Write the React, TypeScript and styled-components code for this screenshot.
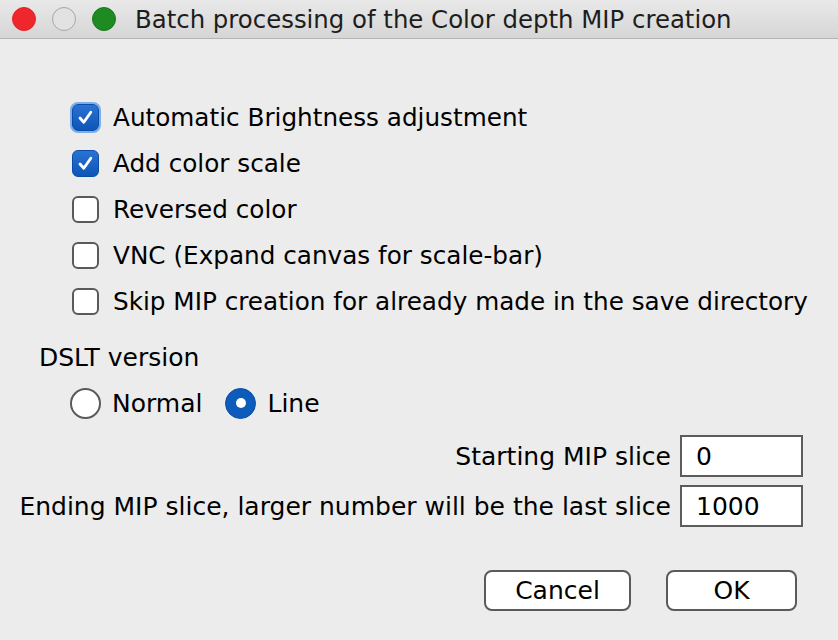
import React, { useState } from 'react';
import styled, { createGlobalStyle, css } from 'styled-components';

const FONT = `"DejaVu Sans", "Verdana", sans-serif`;

const GlobalStyle = createGlobalStyle`
  html, body {
    margin: 0;
    padding: 0;
    background: #ececec;
  }
  body {
    font-family: ${FONT};
    -webkit-font-smoothing: antialiased;
  }
`;

const Window = styled.div`
  width: 838px;
  height: 640px;
  background: #ececec;
  display: flex;
  flex-direction: column;
  overflow: hidden;
`;

const TitleBar = styled.div`
  height: 38px;
  flex-shrink: 0;
  display: flex;
  align-items: center;
  padding-left: 12px;
  background: linear-gradient(#e9e9e9, #d6d6d6);
  border-bottom: 1px solid #b4b4b4;
`;

const Lights = styled.div`
  display: flex;
  gap: 16px;
  margin-right: 19px;
`;

const Light = styled.span<{ fill: string; ring: string }>`
  width: 24px;
  height: 24px;
  border-radius: 50%;
  box-sizing: border-box;
  background: ${({ fill }) => fill};
  border: 1.5px solid ${({ ring }) => ring};
`;

const Title = styled.div`
  font-size: 24.4px;
  color: #1d1d1d;
  white-space: nowrap;
`;

const Body = styled.div`
  flex: 1;
  display: flex;
  flex-direction: column;
  padding: 55px 0 0 0;
  font-size: 25px;
  color: #000;
`;

const CheckList = styled.div`
  display: flex;
  flex-direction: column;
  padding-left: 72px;
  font-size: 24.7px;
`;

const CheckRow = styled.label`
  height: 46px;
  display: flex;
  align-items: center;
  gap: 14px;
  white-space: nowrap;
`;

const Box = styled.span<{ checked: boolean; focused?: boolean }>`
  width: 27px;
  height: 27px;
  box-sizing: border-box;
  border-radius: 6px;
  display: flex;
  align-items: center;
  justify-content: center;
  flex-shrink: 0;
  ${({ checked }) =>
    checked
      ? css`
          background: linear-gradient(#2a72d4, #0c56b8);
          border: 1.5px solid #0a4ca6;
        `
      : css`
          background: #fff;
          border: 2px solid #5a5a5a;
        `}
  ${({ focused }) =>
    focused &&
    css`
      box-shadow: 0 0 0 2px #7eaee6;
    `}
`;

const SectionLabel = styled.div`
  height: 45px;
  display: flex;
  align-items: center;
  padding-left: 39px;
  margin-top: 11px;
`;

const RadioGroup = styled.div`
  height: 46px;
  display: flex;
  align-items: center;
  padding-left: 70px;
  gap: 23px;
`;

const RadioItem = styled.label`
  display: flex;
  align-items: center;
  gap: 11px;
`;

const RadioDot = styled.span<{ checked: boolean }>`
  width: 31px;
  height: 31px;
  box-sizing: border-box;
  border-radius: 50%;
  display: flex;
  align-items: center;
  justify-content: center;
  ${({ checked }) =>
    checked
      ? css`
          background: #0d5cbc;
          border: 1.5px solid #0a4ca6;
          &::after {
            content: '';
            width: 10px;
            height: 10px;
            border-radius: 50%;
            background: #fff;
          }
        `
      : css`
          background: #fff;
          border: 2px solid #5a5a5a;
        `}
`;

const FieldGrid = styled.div`
  display: grid;
  grid-template-columns: auto 123px;
  column-gap: 9px;
  row-gap: 8px;
  justify-content: end;
  align-items: center;
  padding-right: 35px;
  margin-top: 9px;
`;

const FieldLabel = styled.div`
  text-align: right;
  white-space: nowrap;
`;

const TextField = styled.div`
  height: 42px;
  box-sizing: border-box;
  border: 2px solid #5c5c5c;
  background: #fff;
  display: flex;
  align-items: center;
  padding-left: 14px;
`;

const ButtonRow = styled.div`
  display: flex;
  justify-content: flex-end;
  gap: 35px;
  padding-right: 41px;
  margin-top: 43px;
`;

const Button = styled.button<{ w: number }>`
  width: ${({ w }) => w}px;
  height: 41px;
  box-sizing: border-box;
  border: 2px solid #5a5a5a;
  border-radius: 8px;
  background: #fff;
  font-family: ${FONT};
  font-size: 25px;
  color: #000;
  padding: 0;
`;

const Check = () => (
  <svg width="19" height="19" viewBox="0 0 19 19">
    <path d="M4 10 L7.8 14.2 L14.8 4.2" fill="none" stroke="#fff" strokeWidth="2.8" strokeLinecap="round" strokeLinejoin="round" />
  </svg>
);

const options = [
  { label: 'Automatic Brightness adjustment', checked: true, focused: true },
  { label: 'Add color scale', checked: true },
  { label: 'Reversed color', checked: false },
  { label: 'VNC (Expand canvas for scale-bar)', checked: false },
  { label: 'Skip MIP creation for already made in the save directory', checked: false },
];

export default function App() {
  const [mode, setMode] = useState('Line');

  return (
    <>
      <GlobalStyle />
      <Window>
        <TitleBar>
          <Lights>
            <Light fill="#f0262d" ring="#e0232a" />
            <Light fill="#e2e2e2" ring="#a6a6a6" />
            <Light fill="#1e8a22" ring="#18791c" />
          </Lights>
          <Title>Batch processing of the Color depth MIP creation</Title>
        </TitleBar>
        <Body>
          <CheckList>
            {options.map(o => (
              <CheckRow key={o.label}>
                <Box checked={o.checked} focused={o.focused}>
                  {o.checked && <Check />}
                </Box>
                {o.label}
              </CheckRow>
            ))}
          </CheckList>
          <SectionLabel>DSLT version</SectionLabel>
          <RadioGroup>
            {['Normal', 'Line'].map(m => (
              <RadioItem key={m} onClick={() => setMode(m)}>
                <RadioDot checked={mode === m} />
                {m}
              </RadioItem>
            ))}
          </RadioGroup>
          <FieldGrid>
            <FieldLabel>Starting MIP slice</FieldLabel>
            <TextField>0</TextField>
            <FieldLabel>Ending MIP slice, larger number will be the last slice</FieldLabel>
            <TextField>1000</TextField>
          </FieldGrid>
          <ButtonRow>
            <Button w={147}>Cancel</Button>
            <Button w={131}>OK</Button>
          </ButtonRow>
        </Body>
      </Window>
    </>
  );
}
